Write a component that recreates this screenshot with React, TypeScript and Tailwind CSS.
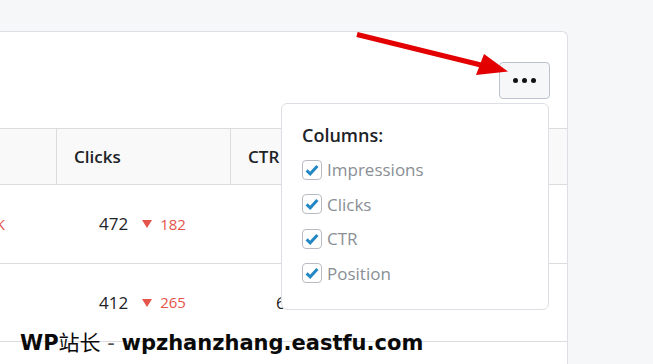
const rows = [
  { lead: "1.2K", clicks: "472", drop: "182", ctr: "5.4%", ctrPad: "pl-[56px]", h: "h-[79px]" },
  { lead: "", clicks: "412", drop: "265", ctr: "6.1%", ctrPad: "pl-[46px]", h: "h-[78px]" },
];

const columns = ["Impressions", "Clicks", "CTR", "Position"];

function Check() {
  return (
    <span className="flex h-[20px] w-[20px] items-center justify-center rounded-[4px] border border-[#b8bcc2] bg-white">
      <svg width="14" height="12" viewBox="0 0 14 12">
        <path d="M1.6 6.4 L5.2 9.8 L12.4 2" fill="none" stroke="#2387c4" strokeWidth="3" />
      </svg>
    </span>
  );
}

function DownTriangle() {
  return (
    <svg width="10" height="8" viewBox="0 0 10 8" className="mx-[14px] mr-[8px]">
      <polygon points="0,0 10,0 5,8" fill="#e5534b" />
    </svg>
  );
}

export default function App() {
  return (
    <div className="relative h-[364px] w-[653px] overflow-hidden bg-[#f6f7f9] font-['Open_Sans',sans-serif]">
      <div className="relative mt-[31px] h-[333px] w-[568px] rounded-tr-[6px] border border-b-0 border-l-0 border-[#dcdfe3] bg-white">
        <div className="flex h-[96px] justify-end pr-[17px] pt-[30px]">
          <button className="flex h-[37px] w-[51px] items-center justify-center gap-[4px] rounded-[4px] border border-[#bcc3cc] bg-[#f6f7f9]">
            <span className="h-[5px] w-[5px] rounded-full bg-[#111]" />
            <span className="h-[5px] w-[5px] rounded-full bg-[#111]" />
            <span className="h-[5px] w-[5px] rounded-full bg-[#111]" />
          </button>
        </div>

        <div className="flex h-[57px] border-y border-[#dcdcde] bg-[#f9f9f9] text-[17px] font-semibold text-[#1d2327]">
          <div className="w-[56px]" />
          <div className="flex w-[174px] items-center border-l border-[#dcdcde] pl-[17px]">Clicks</div>
          <div className="flex w-[170px] items-center border-l border-[#dcdcde] pl-[17px]">CTR</div>
          <div className="flex flex-1 items-center border-l border-[#dcdcde] pl-[17px]">Position</div>
        </div>

        {rows.map((r) => (
          <div key={r.clicks} className={`flex ${r.h} items-center border-b border-[#dcdcde] text-[17px] text-[#1d2327]`}>
            <div className="flex w-[56px] justify-end overflow-hidden pr-[51px] text-[15px] text-[#e5534b]">
              <span className="whitespace-nowrap">{r.lead}</span>
            </div>
            <div className="flex w-[174px] items-center pl-[43px]">
              <span>{r.clicks}</span>
              <DownTriangle />
              <span className="text-[15px] text-[#e5534b]">{r.drop}</span>
            </div>
            <div className={`w-[170px] ${r.ctrPad}`}>{r.ctr}</div>
            <div className="flex-1 pl-[40px]">8.3</div>
          </div>
        ))}

        <div className="absolute left-[281px] top-[71px] h-[207px] w-[268px] rounded-[6px] border border-[#dcdfe3] bg-white pl-[20px] pt-[14px]">
          <div className="flex h-[34.5px] items-center text-[18px] font-semibold text-[#1d2327]">Columns:</div>
          {columns.map((c) => (
            <div key={c} className="flex h-[34.5px] items-center gap-[5px] text-[17px] text-[#8a8f95]">
              <Check />
              <span>{c}</span>
            </div>
          ))}
        </div>
      </div>

      <svg className="pointer-events-none absolute left-0 top-0" width="653" height="364" viewBox="0 0 653 364">
        <line x1="357" y1="34.5" x2="483" y2="65.5" stroke="#e30000" strokeWidth="5" />
        <polygon points="508,71.5 484,54 476,75" fill="#e30000" />
      </svg>

      <div className="absolute left-[20px] top-[331px] whitespace-nowrap font-['DejaVu_Sans','Noto_Sans_CJK_SC',sans-serif] text-[21px] font-bold leading-[21px] text-[#0a0a0a]">
        WP<span className="font-['Noto_Sans_CJK_SC',sans-serif] font-normal">站长</span>
        <span className="font-normal text-[#555]"> - </span>wpzhanzhang.eastfu.com
      </div>
    </div>
  );
}
